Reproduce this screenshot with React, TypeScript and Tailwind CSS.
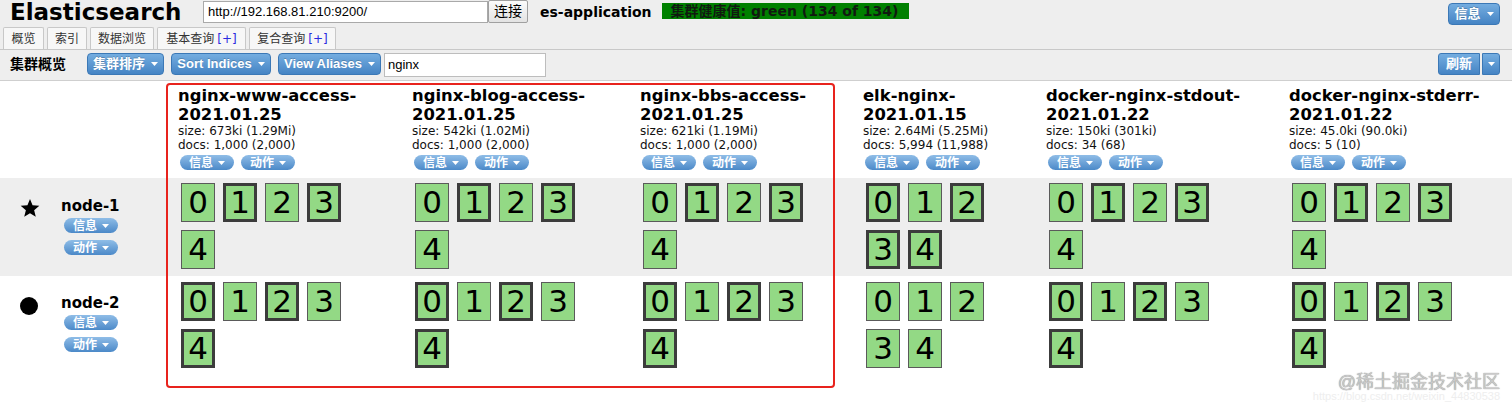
import React from "react";

const V = "font-['DejaVu_Sans','Noto_Sans_CJK_SC',sans-serif]";
const A = "font-['Liberation_Sans','Noto_Sans_CJK_SC',sans-serif]";

function Caret({ className = "" }: { className?: string }) {
  return (
    <svg width="7" height="4" viewBox="0 0 7 4" className={className}>
      <path d="M0 0h7L3.5 4z" fill="white" />
    </svg>
  );
}

function BlueBtn({ label, w }: { label: string; w: string }) {
  return (
    <div
      className={`flex h-[22px] ${w} items-center justify-center gap-[6px] rounded-[4px] border border-[#3b78b6] bg-gradient-to-b from-[#74ade0] to-[#4584c4] text-[13px] font-bold text-white ${A}`}
    >
      <span className="[text-shadow:0_-1px_0_rgba(0,0,0,0.2)]">{label}</span>
      <Caret />
    </div>
  );
}

function Pill({ label }: { label: string }) {
  return (
    <div
      className={`flex h-[15px] w-[54px] items-center justify-center gap-[5px] rounded-full bg-gradient-to-b from-[#8fbde7] to-[#4b89c8] text-[12px] font-bold leading-[15px] text-white ${V}`}
    >
      <span className="pt-[2px]">{label}</span>
      <Caret />
    </div>
  );
}

type Shard = [number, boolean];

function ShardBox({ n, primary }: { n: number; primary: boolean }) {
  return (
    <div
      className={`flex h-[39px] w-[34px] items-center justify-center bg-[#93d985] text-[31px] leading-none text-black ${V} ${
        primary ? "border-[3px] border-[#3c3c3c]" : "border border-[#5a5a5a]"
      }`}
    >
      {n}
    </div>
  );
}

function ShardGroup({ rows }: { rows: Shard[][] }) {
  return (
    <div className="flex flex-col gap-[8px] pl-[5px]">
      {rows.map((r, i) => (
        <div key={i} className="flex gap-[8px]">
          {r.map(([n, p]) => (
            <ShardBox key={n} n={n} primary={p} />
          ))}
        </div>
      ))}
    </div>
  );
}

const widths = ["w-[234px]", "w-[228px]", "w-[223px]", "w-[183px]", "w-[243px]", "w-[225px]"];

const indices = [
  { l1: "nginx-www-access-", l2: "2021.01.25", size: "size: 673ki (1.29Mi)", docs: "docs: 1,000 (2,000)" },
  { l1: "nginx-blog-access-", l2: "2021.01.25", size: "size: 542ki (1.02Mi)", docs: "docs: 1,000 (2,000)" },
  { l1: "nginx-bbs-access-", l2: "2021.01.25", size: "size: 621ki (1.19Mi)", docs: "docs: 1,000 (2,000)" },
  { l1: "elk-nginx-", l2: "2021.01.15", size: "size: 2.64Mi (5.25Mi)", docs: "docs: 5,994 (11,988)" },
  { l1: "docker-nginx-stdout-", l2: "2021.01.22", size: "size: 150ki (301ki)", docs: "docs: 34 (68)" },
  { l1: "docker-nginx-stderr-", l2: "2021.01.22", size: "size: 45.0ki (90.0ki)", docs: "docs: 5 (10)" },
];

const T = true;
const F = false;
const std1: Shard[][] = [
  [[0, F], [1, T], [2, F], [3, T]],
  [[4, F]],
];
const std2: Shard[][] = [
  [[0, T], [1, F], [2, T], [3, F]],
  [[4, T]],
];
const node1: Shard[][][] = [
  std1,
  std1,
  std1,
  [
    [[0, T], [1, F], [2, T]],
    [[3, T], [4, T]],
  ],
  std1,
  std1,
];
const node2: Shard[][][] = [
  std2,
  std2,
  std2,
  [
    [[0, F], [1, F], [2, F]],
    [[3, F], [4, F]],
  ],
  std2,
  std2,
];

function Star() {
  return (
    <svg width="20" height="19" viewBox="0 0 24 23">
      <path d="M12 0l3.1 7.6 8.2.6-6.3 5.3 2 8L12 17.2 5 21.5l2-8L.7 8.2l8.2-.6z" fill="black" />
    </svg>
  );
}

function NodeCell({ name, icon, pt }: { name: string; icon: React.ReactNode; pt: string }) {
  return (
    <div className={`flex w-[176px] shrink-0 ${pt}`}>
      <div className="flex w-[61px] shrink-0 justify-start pl-[20px] pt-[2px]">{icon}</div>
      <div className="flex flex-col">
        <div className={`text-[15px] font-bold leading-[18px] text-black ${V}`}>{name}</div>
        <div className="mt-[3px] pl-[3px]">
          <Pill label="信息" />
        </div>
        <div className="mt-[7px] pl-[3px]">
          <Pill label="动作" />
        </div>
      </div>
    </div>
  );
}

export default function App() {
  return (
    <div className="relative h-[408px] w-[1512px] overflow-hidden bg-white text-black">
      {/* Header */}
      <div className="bg-[#eeeeee]">
        <div className="flex h-[27px] items-start">
          <div className={`ml-[10px] mt-[-2px] w-[193px] text-[23px] font-bold leading-[28px] ${V}`}>Elasticsearch</div>
          <div className={`mt-[1px] flex h-[22px] w-[285px] items-center border border-[#a9a9a9] bg-white pl-[4px] text-[13px] ${A}`}>
            http://192.168.81.210:9200/
          </div>
          <div className={`flex h-[23px] w-[40px] items-center justify-center rounded-[2px] border border-[#a0a0a0] bg-gradient-to-b from-[#fbfbfb] to-[#e3e3e3] text-[14px] ${A}`}>
            连接
          </div>
          <div className={`ml-[12px] mt-[2px] text-[14px] font-bold leading-[20px] ${V}`}>es-application</div>
          <div className={`ml-[10px] mt-[3px] flex h-[16px] w-[247px] items-center bg-[#008000] pl-[9px] text-[14px] font-bold leading-none text-[#101a10] ${V}`}>
            集群健康值: green (134 of 134)
          </div>
          <div className="ml-auto mr-[12px] mt-[3px]">
            <BlueBtn label="信息" w="w-[52px]" />
          </div>
        </div>
        {/* Tabs */}
        <div className={`flex h-[23px] items-end gap-[3px] border-b border-[#c8c8c8] pl-[3px] text-[12px] ${V}`}>
          {[
            { t: "概览", w: "w-[41px]" },
            { t: "索引", w: "w-[40px]" },
            { t: "数据浏览", w: "w-[64px]" },
            { t: "基本查询", w: "w-[89px]", plus: true },
            { t: "复合查询", w: "w-[87px]", plus: true },
          ].map((tab) => (
            <div
              key={tab.t}
              className={`flex h-[22px] ${tab.w} items-center justify-center gap-[3px] rounded-t-[2px] border border-b-0 border-[#c8c8c8] bg-[#f7f7f7] text-[#333]`}
            >
              <span>{tab.t}</span>
              {tab.plus && <span className="text-[#2a2ae0]">[+]</span>}
            </div>
          ))}
        </div>
        {/* Toolbar */}
        <div className="flex h-[31px] items-start border-b border-[#cfcfcf] pt-[3px]">
          <div className={`ml-[10px] mt-[2px] w-[77px] text-[14px] font-bold leading-[18px] ${V}`}>集群概览</div>
          <div className="flex gap-[7px]">
            <BlueBtn label="集群排序" w="w-[77px]" />
            <BlueBtn label="Sort Indices" w="w-[100px]" />
            <BlueBtn label="View Aliases" w="w-[103px]" />
          </div>
          <div className={`ml-[3px] flex h-[24px] w-[162px] items-center border border-[#bdbdbd] bg-white pl-[3px] text-[13px] ${A}`}>
            nginx
          </div>
          <div className="ml-auto mr-[12px] flex gap-[2px]">
            <div className={`flex h-[22px] w-[42px] items-center justify-center rounded-l-[3px] border border-[#3b78b6] bg-gradient-to-b from-[#74ade0] to-[#4584c4] text-[13px] font-bold text-white ${A}`}>
              刷新
            </div>
            <div className="flex h-[22px] w-[18px] items-center justify-center rounded-r-[3px] border border-[#3b78b6] bg-gradient-to-b from-[#74ade0] to-[#4584c4]">
              <Caret />
            </div>
          </div>
        </div>
      </div>

      {/* Index header row */}
      <div className="flex h-[97px]">
        <div className="w-[176px] shrink-0" />
        {indices.map((ix, i) => (
          <div key={i} className={`${widths[i]} shrink-0 pl-[2px] pt-[5px]`}>
            <div className={`text-[16.4px] font-bold leading-[19px] ${V}`}>{ix.l1}</div>
            <div className={`text-[16.4px] font-bold leading-[19px] ${V}`}>{ix.l2}</div>
            <div className={`text-[12px] leading-[14px] text-[#111] ${V}`}>{ix.size}</div>
            <div className={`text-[12px] leading-[14px] text-[#111] ${V}`}>{ix.docs}</div>
            <div className="mt-[3px] flex gap-[7px] pl-[2px]">
              <Pill label="信息" />
              <Pill label="动作" />
            </div>
          </div>
        ))}
      </div>

      {/* node-1 */}
      <div className="flex h-[98px] bg-[#eeeeee]">
        <NodeCell name="node-1" icon={<Star />} pt="pt-[19px]" />
        {node1.map((rows, i) => (
          <div key={i} className={`${widths[i]} shrink-0 pt-[5px]`}>
            <ShardGroup rows={rows} />
          </div>
        ))}
      </div>

      {/* node-2 */}
      <div className="flex h-[100px]">
        <NodeCell
          name="node-2"
          icon={<div className="mt-[1px] h-[18px] w-[18px] rounded-full bg-black" />}
          pt="pt-[18px]"
        />
        {node2.map((rows, i) => (
          <div key={i} className={`${widths[i]} shrink-0 pt-[6px]`}>
            <ShardGroup rows={rows} />
          </div>
        ))}
      </div>

      {/* red annotation rectangle */}
      <div className="pointer-events-none absolute left-[166px] top-[83px] h-[305px] w-[669px] rounded-[4px] border-2 border-[#e8231d]" />

      {/* watermark */}
      <div className="pointer-events-none absolute right-[12px] top-[370px] flex flex-col items-end">
        <div className={`text-[18px] leading-[24px] text-[#c9c9c9] [text-shadow:0_0_1px_#777] ${A}`}>@稀土掘金技术社区</div>
        <div className={`-mt-[4px] text-[11px] leading-[12px] text-[#eeeeee] ${A}`}>https://blog.csdn.net/weixin_44830538</div>
      </div>
    </div>
  );
}
